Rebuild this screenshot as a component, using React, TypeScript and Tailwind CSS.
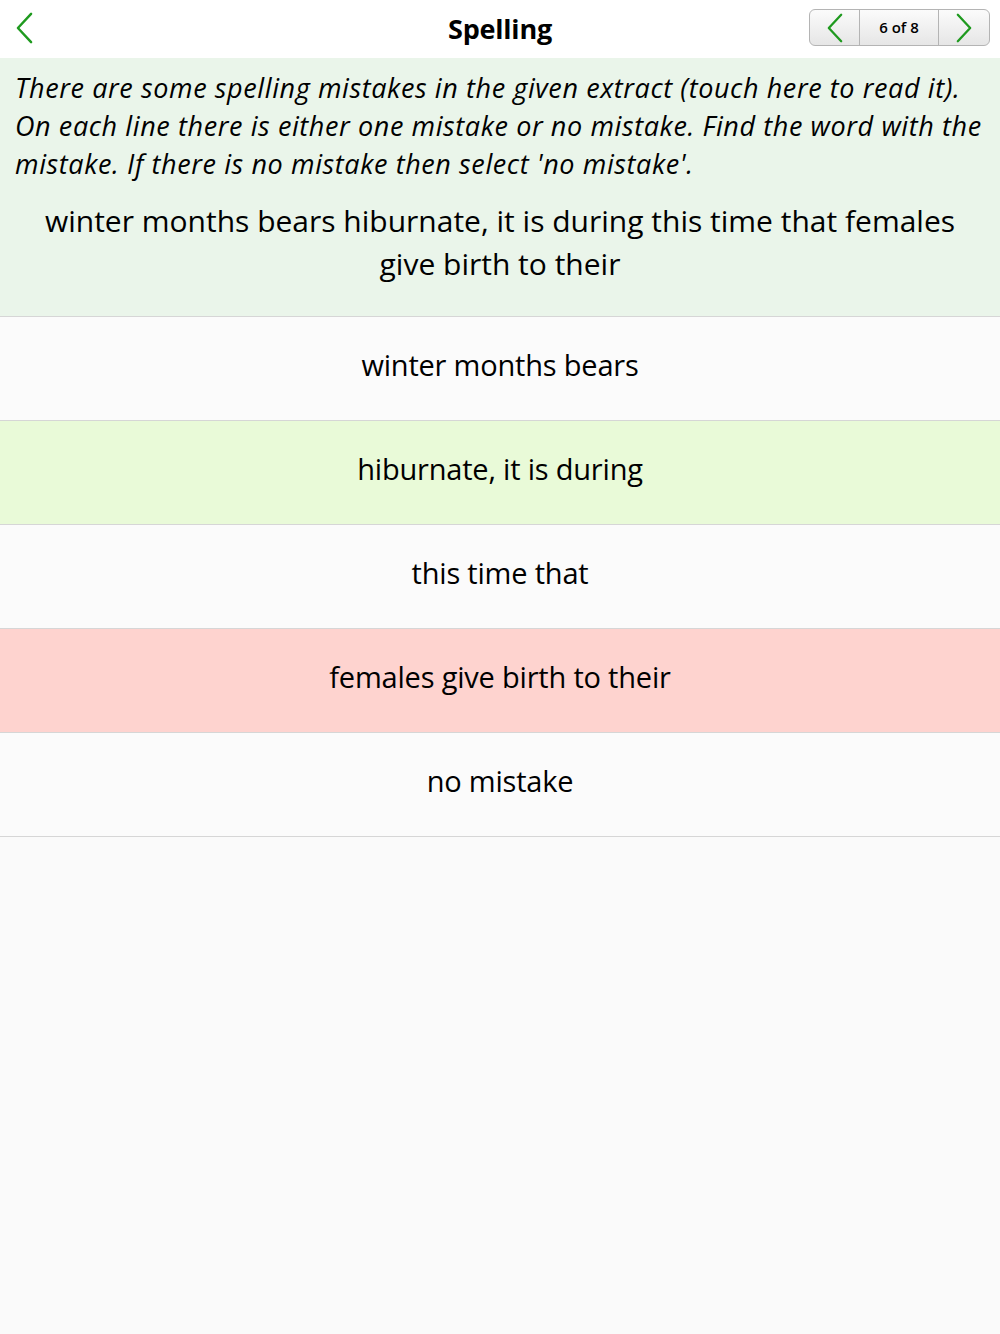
import React from "react";

const rows = [
  { text: "winter months bears", bg: "bg-[#fbfbfb]" },
  { text: "hiburnate, it is during", bg: "bg-[#e9fad8]" },
  { text: "this time that", bg: "bg-[#fbfbfb]" },
  { text: "females give birth to their", bg: "bg-[#fed3cf]" },
  { text: "no mistake", bg: "bg-[#fbfbfb]" },
];

const Chevron = ({ dir, className }: { dir: "left" | "right"; className?: string }) => (
  <svg viewBox="0 0 20 34" className={className} fill="none" stroke="#1f9a1f" strokeWidth="2.6" strokeLinecap="round" strokeLinejoin="round">
    {dir === "left" ? <path d="M17 2 L3 17 L17 32" /> : <path d="M3 2 L17 17 L3 32" />}
  </svg>
);

export default function App() {
  return (
    <div className="min-h-[1334px] w-[1000px] bg-[#fafafa] font-['Open_Sans',sans-serif] text-black">
      <header className="relative flex h-[58px] items-center justify-center bg-white">
        <button className="absolute left-[15px] top-[12px]">
          <Chevron dir="left" className="h-[32px] w-[19px]" />
        </button>
        <h1 className="text-[27px] font-bold tracking-[-0.2px]">Spelling</h1>
        <div className="absolute right-[10px] top-[9px] flex h-[37px] w-[181px] overflow-hidden rounded-[6px] border border-[#b4b4b4] bg-gradient-to-b from-[#fbfbfb] to-[#e6e6e6]">
          <div className="flex w-[50px] items-center justify-center border-r border-[#b4b4b4]">
            <Chevron dir="left" className="h-[30px] w-[18px]" />
          </div>
          <div className="flex flex-1 items-center justify-center border-r border-[#b4b4b4] text-[15px] font-semibold">
            6 of 8
          </div>
          <div className="flex w-[50px] items-center justify-center">
            <Chevron dir="right" className="h-[30px] w-[18px]" />
          </div>
        </div>
      </header>

      <section className="bg-[#eaf5ea] px-[15px] pb-[31px] pt-[11px]">
        <p className="text-[27px] italic leading-[38px] tracking-[0.6px]">
          There are some spelling mistakes in the given extract (touch here to read it).
          <br />
          On each line there is either one mistake or no mistake. Find the word with the
          <br />
          mistake. If there is no mistake then select 'no mistake'.
        </p>
        <p className="mt-[16px] text-center text-[30px] leading-[43px]">
          winter months bears hiburnate, it is during this time that females
          <br />
          give birth to their
        </p>
      </section>

      <div className="border-b border-[#d6d6d6]">
        {rows.map((r) => (
          <div
            key={r.text}
            className={`flex h-[104px] items-center justify-center border-t border-[#d6d6d6] pb-[8px] text-[29px] tracking-[-0.2px] ${r.bg}`}
          >
            {r.text}
          </div>
        ))}
      </div>
    </div>
  );
}
